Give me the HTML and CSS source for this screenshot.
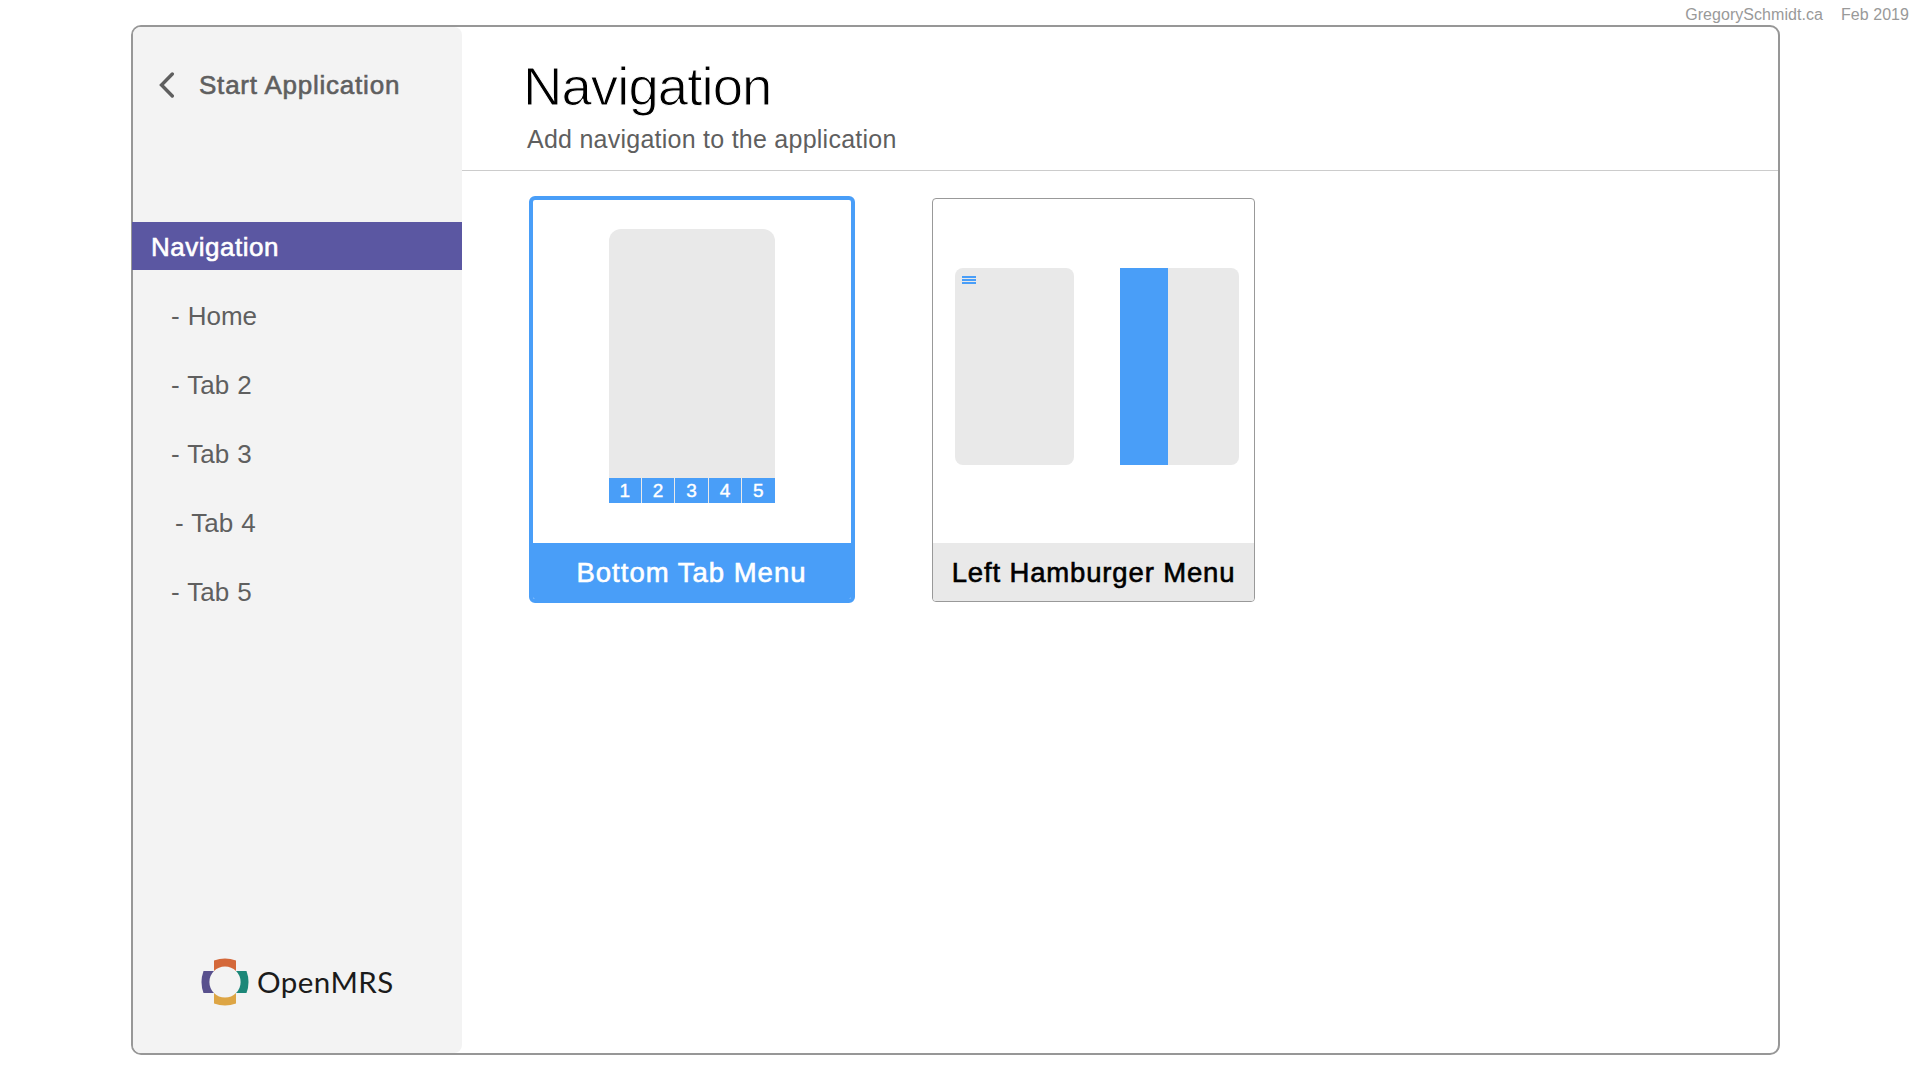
FILE: index.html
```
<!DOCTYPE html>
<html lang="en">
<head>
  <meta charset="UTF-8" />
  <meta name="viewport" content="width=device-width, initial-scale=1.0"/>
  <title>Navigation - OpenMRS</title>
  <link rel="stylesheet" href="styles.css">
</head>
<body>
  <div class="credit">
    <span>GregorySchmidt.ca</span>
    <span>Feb 2019</span>
  </div>

  <div class="window">
    <aside class="sidebar">
      <a class="back">
        <svg class="back-icon" width="16" height="26" viewBox="0 0 16 26">
          <path d="M13.3 2 L2.5 13 L13.3 24" />
        </svg>
        <span>Start Application</span>
      </a>
      <nav>
        <div class="nav-title">Navigation</div>
        <ul class="nav-list">
          <li>- Home</li>
          <li>- Tab 2</li>
          <li>- Tab 3</li>
          <li class="shifted">- Tab 4</li>
          <li>- Tab 5</li>
        </ul>
      </nav>
      <div class="logo">
        <svg width="48" height="48" viewBox="0 0 48 48">
          <path fill="#d46839" d="M13 2.5 Q24 -1.5 35 2.5 V16 H13 Z" />
          <path fill="#dda544" d="M13 45.5 Q24 49.5 35 45.5 V32 H13 Z" />
          <path fill="#58508d" d="M2.5 13 Q-1.5 24 2.5 35 H16 V13 Z" />
          <path fill="#1c8778" d="M45.5 13 Q49.5 24 45.5 35 H32 V13 Z" />
          <circle fill="#f3f3f3" cx="24" cy="24" r="15.6" />
        </svg>
        <span>OpenMRS</span>
      </div>
    </aside>

    <main>
      <header>
        <h1>Navigation</h1>
        <p>Add navigation to the application</p>
      </header>
      <section class="cards">
        <div class="card selected">
          <div class="preview">
            <div class="phone-large">
              <div class="tabs">
                <span>1</span><span>2</span><span>3</span><span>4</span><span>5</span>
              </div>
            </div>
          </div>
          <div class="card-label">Bottom Tab Menu</div>
        </div>
        <div class="card">
          <div class="preview pair">
            <div class="phone">
              <div class="burger"><i></i><i></i><i></i></div>
            </div>
            <div class="phone open">
              <div class="drawer"></div>
            </div>
          </div>
          <div class="card-label">Left Hamburger Menu</div>
        </div>
      </section>
    </main>
  </div>
</body>
</html>
```
FILE: styles.css
```
* {
  box-sizing: border-box;
}
body {
  margin: 0;
  height: 1080px;
  overflow: hidden;
  background: #fff;
  font-family: "Liberation Sans", Arial, sans-serif;
  color: #5f5f5f;
}
.credit {
  display: flex;
  justify-content: flex-end;
  gap: 18px;
  height: 25px;
  padding: 5px 11px 0 0;
  font-size: 16px;
  line-height: 19px;
  letter-spacing: 0.05px;
  color: #999;
}
.window {
  display: flex;
  width: 1649px;
  height: 1030px;
  margin-left: 131px;
  border: 2px solid #979797;
  border-radius: 10px;
}
.sidebar {
  display: flex;
  flex-direction: column;
  width: 329px;
  background: #f3f3f3;
  border-radius: 8px;
}
.back {
  display: flex;
  align-items: center;
  gap: 24px;
  height: 30px;
  margin: 43px 0 122px 26px;
  font-size: 26px;
  line-height: 30px;
  letter-spacing: 0.78px;
  -webkit-text-stroke: 0.6px #5f5f5f;
}
.back-icon {
  fill: none;
  stroke: #5f5f5f;
  stroke-width: 3.4;
  stroke-linecap: round;
}
.nav-title {
  height: 48px;
  margin-left: -1px;
  padding-left: 19px;
  background: #5b57a2;
  color: #fff;
  font-size: 26px;
  line-height: 50px;
  letter-spacing: 0.5px;
  -webkit-text-stroke: 0.6px #fff;
}
.nav-list {
  list-style: none;
  margin: 12px 0 0;
  padding: 0 0 0 38px;
  font-size: 26px;
  line-height: 69px;
  word-spacing: 0.8px;
}
.nav-list .shifted {
  padding-left: 4px;
}
.logo {
  display: flex;
  align-items: center;
  gap: 8px;
  margin: auto 0 47px 68px;
  font-family: Lato, sans-serif;
  font-size: 29.5px;
  line-height: 48px;
  letter-spacing: 0.45px;
  color: #1b1b1b;
}
main {
  flex: 1;
}
header {
  height: 144px;
  padding: 30px 0 0 61px;
  border-bottom: 1px solid #ccc;
}
h1 {
  margin: 0;
  font-size: 54.5px;
  font-weight: normal;
  line-height: 60px;
  letter-spacing: -0.9px;
  color: #000;
  /* white outline thins the strokes down to a light weight */
  -webkit-text-stroke: 1px #fff;
}
header p {
  margin: 6px 0 0 4px;
  font-size: 25px;
  line-height: 32px;
  letter-spacing: 0.25px;
}
.cards {
  display: flex;
  align-items: flex-start;
  gap: 77.5px;
  padding: 25px 0 0 66.5px;
}
.card {
  width: 323px;
  height: 404px;
  margin-top: 2px;
  border: 1px solid #999;
  border-radius: 4px;
  overflow: hidden;
}
.card.selected {
  width: 326px;
  height: 407px;
  margin-top: 0;
  border: 4px solid #499ef8;
  border-radius: 6px;
}
.preview {
  display: flex;
  justify-content: center;
  height: 344px;
  padding-top: 69px;
}
.selected .preview {
  height: 343px;
  padding-top: 29px;
}
.card-label {
  height: 60px;
  background: #e9e9e9;
  color: #000;
  font-size: 27.5px;
  line-height: 59px;
  letter-spacing: 0.85px;
  text-align: center;
  white-space: nowrap;
  -webkit-text-stroke: 0.6px #000;
}
.selected .card-label {
  background: #499ef8;
  color: #fff;
  letter-spacing: 1px;
  -webkit-text-stroke-color: #fff;
}
.phone-large {
  display: flex;
  align-items: flex-end;
  width: 166px;
  height: 274px;
  background: #e9e9e9;
  border-radius: 12px 12px 0 0;
}
.tabs {
  display: flex;
  gap: 1px;
  width: 100%;
}
.tabs span {
  flex: 1;
  height: 25px;
  background: #499ef8;
  color: #fff;
  font-size: 19px;
  line-height: 26px;
  text-align: center;
  -webkit-text-stroke: 0.4px #fff;
}
.preview.pair {
  justify-content: flex-start;
  gap: 46px;
  padding-left: 22px;
}
.phone {
  width: 119px;
  height: 197px;
  padding: 8px 0 0 7px;
  background: #e9e9e9;
  border-radius: 8px;
}
.phone.open {
  padding: 0;
  border-radius: 0 8px 8px 0;
}
.burger {
  display: flex;
  flex-direction: column;
  gap: 1px;
  width: 14px;
}
.burger i {
  height: 2px;
  background: #499ef8;
}
.drawer {
  width: 48px;
  height: 100%;
  background: #499ef8;
}
```
